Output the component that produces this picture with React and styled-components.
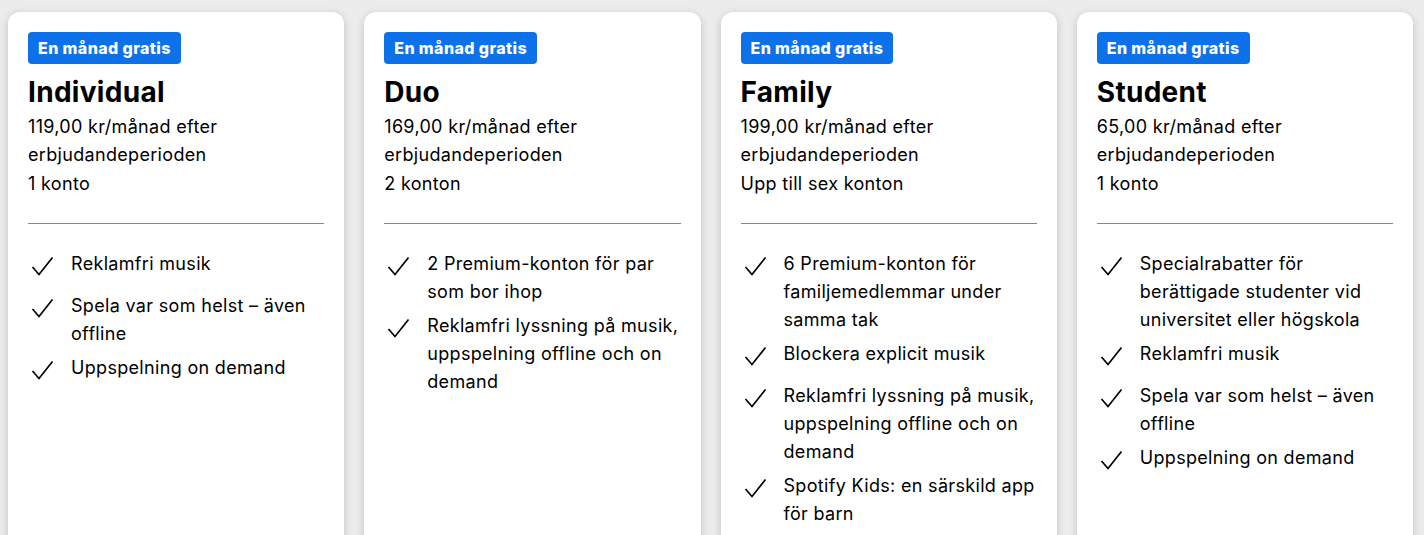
import styled, { createGlobalStyle } from 'styled-components';

const GlobalStyle = createGlobalStyle`
  body {
    margin: 0;
    background: #ececec;
    font-family: Inter, "Noto Sans", sans-serif;
    color: #000;
  }
`;

const Page = styled.div`
  display: grid;
  grid-template-columns: repeat(4, 1fr);
  gap: 20px;
  padding: 12px 11px 0 8px;
  height: 535px;
  overflow: hidden;
  box-sizing: border-box;
`;

const Card = styled.div`
  background: #fff;
  border-radius: 12px;
  box-shadow: 0 2px 8px rgba(0, 0, 0, 0.18);
  padding: 20px;
  min-height: 560px;
  box-sizing: border-box;
`;

const Badge = styled.span`
  display: inline-flex;
  align-items: center;
  height: 32px;
  padding: 0 10px;
  border-radius: 4px;
  background: #0d72ea;
  color: #fff;
  font-size: 16px;
  font-weight: 800;
  letter-spacing: 0.4px;
`;

const Title = styled.h2`
  margin: 10px 0 3px;
  font-size: 28px;
  line-height: 36px;
  font-weight: 700;
  letter-spacing: 0.3px;
`;

const Text = styled.p`
  margin: 0;
  font-size: 18px;
  line-height: 28px;
  letter-spacing: 0.32px;
  margin-top: ${props => props.space || 0}px;
`;

const Divider = styled.hr`
  border: none;
  border-top: 1px solid #878787;
  margin: 25px 0 26px;
`;

const List = styled.ul`
  list-style: none;
  margin: 0;
  padding: 0;
  display: flex;
  flex-direction: column;
  gap: 6px;
`;

const Item = styled.li`
  display: flex;
  gap: 17px;
  font-size: 18px;
  line-height: 28px;
  letter-spacing: 0.32px;
`;

const Icon = styled.span`
  flex: none;
  width: 24px;
  height: 24px;
  padding: 5px 0 7px 2px;
`;

const Check = () => (
  <Icon>
    <svg width="24" height="24" viewBox="0 0 24 24" fill="none">
      <path d="M2.5 12 L9 19.5 L22.5 2.5" stroke="#000" strokeWidth="1.7" />
    </svg>
  </Icon>
);

const plans = [
  {
    name: 'Individual',
    price: '119,00 kr/månad efter erbjudandeperioden',
    accounts: '1 konto',
    features: ['Reklamfri musik', 'Spela var som helst – även offline', 'Uppspelning on demand'],
  },
  {
    name: 'Duo',
    price: '169,00 kr/månad efter erbjudandeperioden',
    accounts: '2 konton',
    features: [
      '2 Premium-konton för par som bor ihop',
      'Reklamfri lyssning på musik, uppspelning offline och on demand',
    ],
  },
  {
    name: 'Family',
    price: '199,00 kr/månad efter erbjudandeperioden',
    accounts: 'Upp till sex konton',
    features: [
      '6 Premium-konton för familjemedlemmar under samma tak',
      'Blockera explicit musik',
      'Reklamfri lyssning på musik, uppspelning offline och on demand',
      'Spotify Kids: en särskild app för barn',
    ],
  },
  {
    name: 'Student',
    price: '65,00 kr/månad efter erbjudandeperioden',
    accounts: '1 konto',
    features: [
      'Specialrabatter för berättigade studenter vid universitet eller högskola',
      'Reklamfri musik',
      'Spela var som helst – även offline',
      'Uppspelning on demand',
    ],
  },
];

export default function App() {
  return (
    <>
      <GlobalStyle />
      <Page>
        {plans.map(plan => (
          <Card key={plan.name}>
            <Badge>En månad gratis</Badge>
            <Title>{plan.name}</Title>
            <Text>{plan.price}</Text>
            <Text space={1}>{plan.accounts}</Text>
            <Divider />
            <List>
              {plan.features.map(f => (
                <Item key={f}>
                  <Check />
                  <span>{f}</span>
                </Item>
              ))}
            </List>
          </Card>
        ))}
      </Page>
    </>
  );
}
